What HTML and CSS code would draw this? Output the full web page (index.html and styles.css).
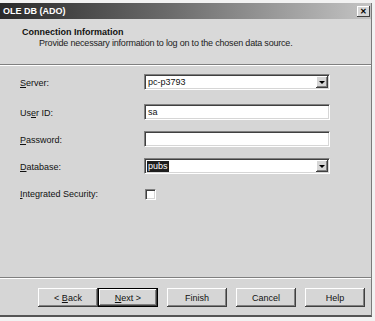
FILE: index.html
```html
<!DOCTYPE html>
<html>
<head>
<meta charset="utf-8">
<link rel="stylesheet" href="styles.css">
</head>
<body>
<div class="dlg">
  <div class="title">
    <span class="title-text">OLE DB (ADO)</span>
    <span class="close">&#x2715;</span>
  </div>
  <div class="header">
    <div class="h1">Connection Information</div>
    <div class="h2">Provide necessary information to log on to the chosen data source.</div>
  </div>
  <div class="sep"></div>
  <div class="content">
    <div class="row">
      <label class="lbl"><u>S</u>erver:</label>
      <div class="field combo"><span class="val">pc-p3793</span><span class="drop"><span class="tri"></span></span></div>
    </div>
    <div class="row">
      <label class="lbl">Us<u>e</u>r ID:</label>
      <div class="field"><span class="val">sa</span></div>
    </div>
    <div class="row">
      <label class="lbl"><u>P</u>assword:</label>
      <div class="field"></div>
    </div>
    <div class="row">
      <label class="lbl"><u>D</u>atabase:</label>
      <div class="field combo"><span class="val sel">pubs</span><span class="drop"><span class="tri"></span></span></div>
    </div>
    <div class="row">
      <label class="lbl"><u>I</u>ntegrated Security:</label>
      <div class="check"></div>
    </div>
  </div>
  <div class="sep"></div>
  <div class="buttons">
    <div class="group">
      <div class="btn">&lt;&nbsp;<u>B</u>ack</div>
      <div class="btn default"><u>N</u>ext&nbsp;&gt;</div>
    </div>
    <div class="btn">Finish</div>
    <div class="btn">Cancel</div>
    <div class="btn">Help</div>
  </div>
</div>
</body>
</html>
```

FILE: styles.css
```css
html, body {
  margin: 0;
  padding: 0;
  background: #f2f2f2;
}
body {
  font-family: "Liberation Sans", Arial, sans-serif;
  font-size: 9px;
  color: #111;
  width: 375px;
  height: 321px;
  overflow: hidden;
}
.dlg {
  width: 371px;
  margin-top: 3px;
  background: #d6d6d6;
  border-right: 1px solid #7a7a7a;
  border-bottom: 2px solid #555;
  display: flex;
  flex-direction: column;
}
.title {
  height: 16px;
  display: flex;
  align-items: center;
  justify-content: space-between;
  background: linear-gradient(to right, #2a2a2a 0%, #6a6a6a 45%, #c4c4c4 100%);
  padding: 0 1px 0 3px;
}
.title-text {
  color: #fff;
  font-weight: bold;
  font-size: 9px;
}
.close {
  width: 13px;
  height: 11px;
  background: #d6d6d6;
  box-shadow: inset -1px -1px #404040, inset 1px 1px #fff;
  font-size: 8px;
  font-weight: bold;
  line-height: 11px;
  text-align: center;
  color: #000;
}
.header {
  height: 45px;
  background: #d9d9d9;
  padding-top: 8px;
  box-sizing: border-box;
}
.h1 {
  font-weight: bold;
  padding-left: 22px;
  line-height: 11px;
}
.h2 {
  padding-left: 39px;
  line-height: 11px;
  letter-spacing: -0.2px;
  color: #222;
}
.sep {
  height: 1px;
  background: #808080;
  border-bottom: 1px solid #fff;
}
.content {
  height: 211px;
  padding: 8px 0 0 20px;
  box-sizing: border-box;
  display: flex;
  flex-direction: column;
  gap: 11px;
}
.content .row:nth-child(2) {
  margin-top: 3px;
}
.row {
  display: flex;
  align-items: center;
  height: 16px;
}
.lbl {
  width: 124px;
  padding-top: 2px;
}
.field {
  width: 186px;
  height: 16px;
  box-sizing: border-box;
  background: #fff;
  border: 1px solid;
  border-color: #808080 #fff #fff #808080;
  box-shadow: inset 1px 1px #404040, inset -1px -1px #d6d6d6;
  display: flex;
  align-items: center;
  padding-left: 2px;
  position: relative;
}
.val {
  line-height: 11px;
  padding: 0 1px;
}
.val.sel {
  background: #1e1e1e;
  color: #fff;
}
.drop {
  position: absolute;
  right: 1px;
  top: 1px;
  width: 12px;
  height: 12px;
  background: #d6d6d6;
  box-shadow: inset -1px -1px #404040, inset 1px 1px #fff, inset -2px -2px #808080;
  display: flex;
  align-items: center;
  justify-content: center;
}
.tri {
  width: 0;
  height: 0;
  border-left: 3px solid transparent;
  border-right: 3px solid transparent;
  border-top: 3px solid #000;
}
.check {
  width: 11px;
  height: 11px;
  box-sizing: border-box;
  background: #fff;
  border: 1px solid;
  border-color: #808080 #fff #fff #808080;
  box-shadow: inset 1px 1px #404040, inset -1px -1px #d6d6d6;
  margin-left: 1px;
  margin-top: 2px;
}
.buttons {
  display: flex;
  gap: 9px;
  padding: 9px 0 8px 38px;
}
.group {
  display: flex;
}
.btn {
  width: 60px;
  height: 19px;
  box-sizing: border-box;
  display: flex;
  align-items: center;
  justify-content: center;
  background: #d6d6d6;
  box-shadow: inset -1px -1px #404040, inset 1px 1px #fff, inset -2px -2px #808080;
}
.btn.default {
  border: 1px solid #000;
}
```
